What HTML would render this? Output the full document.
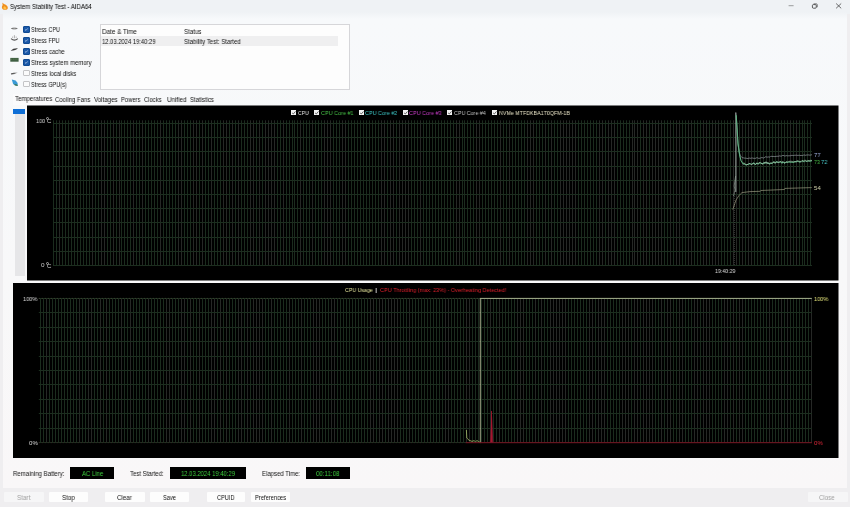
<!DOCTYPE html>
<html><head><meta charset="utf-8">
<style>
html,body{margin:0;padding:0;}
body{width:850px;height:507px;overflow:hidden;position:relative;background:#efeef0;font-family:"Liberation Sans",sans-serif;color:#1b1b1b;}
.a{position:absolute;white-space:nowrap;line-height:1;transform-origin:0 0;will-change:transform;}
.t{font-size:6.5px;letter-spacing:-0.2px;}
#title{position:absolute;left:0;top:0;width:850px;height:14px;background:#eff2f5;}
#panel{position:absolute;left:3px;top:12px;width:844px;height:475.5px;background:linear-gradient(#eff2f5,#f7f9fb 7px,#f8f8f9 55%,#f9f7f8);}
.cb{position:absolute;width:4.4px;height:4.4px;border-radius:1px;background:#1a58a8;border:0.5px solid #0f4a92;}
.cb svg{position:absolute;left:0;top:0;}
.ucb{position:absolute;width:4.4px;height:4.4px;border-radius:1px;background:#fbfbfb;border:0.55px solid #c4c4c6;}
.btn{position:absolute;height:10px;background:#fdfdfd;border-radius:1px;}
.blk{position:absolute;background:#000;color:#3fd23f;font-size:6.5px;letter-spacing:-0.2px;text-align:center;}
</style></head><body>
<div id="title"></div>
<div id="panel"></div>
<!-- title -->
<svg class="a" style="left:0;top:0" width="10" height="12"><path d="M2.2 2.4C3.2 3.6 4.2 3.8 5.3 4.6C6.8 5.6 8 6.6 7.8 8.2C7.6 9.4 6.2 9.9 4.8 9.8C3.2 9.7 2 8.8 1.9 7.4C1.8 6.4 2.5 5.8 2.6 4.8C2.7 4 2.4 3.2 2.2 2.4Z" fill="#f0901e"/><path d="M4.2 6.2C5.4 6.8 6.4 7.4 6.3 8.4C6.2 9.1 5.4 9.4 4.7 9.3C3.8 9.2 3.3 8.6 3.4 7.8C3.5 7.2 4 6.9 4.2 6.2Z" fill="#ffc24a"/></svg>
<svg class="a" style="left:780px;top:0" width="70" height="14">
<path d="M8.6 5.7H13.6" stroke="#555" stroke-width="0.55"/>
<rect x="32.4" y="4.6" width="3.9" height="3.6" rx="1" fill="none" stroke="#333" stroke-width="0.8"/>
<path d="M33.6 3.8H36.2Q37.3 3.8 37.3 4.9V7.2" fill="none" stroke="#333" stroke-width="0.6"/>
<path d="M56.1 3.5L61.2 8.3M61.2 3.5L56.1 8.3" stroke="#333" stroke-width="0.7"/>
</svg>
<!-- checkboxes -->
<div class="cb" style="left:23.3px;top:26.15px"><svg width="5" height="5" viewBox="0 0 5 5" style="position:absolute;left:0;top:0"><path d="M1.0 2.5L2.0 3.4L3.7 1.4" stroke="#dce8f8" stroke-width="0.6" fill="none"/></svg></div>
<div class="cb" style="left:23.3px;top:37.25px"><svg width="5" height="5" viewBox="0 0 5 5" style="position:absolute;left:0;top:0"><path d="M1.0 2.5L2.0 3.4L3.7 1.4" stroke="#dce8f8" stroke-width="0.6" fill="none"/></svg></div>
<div class="cb" style="left:23.3px;top:48.35px"><svg width="5" height="5" viewBox="0 0 5 5" style="position:absolute;left:0;top:0"><path d="M1.0 2.5L2.0 3.4L3.7 1.4" stroke="#dce8f8" stroke-width="0.6" fill="none"/></svg></div>
<div class="cb" style="left:23.3px;top:59.30px"><svg width="5" height="5" viewBox="0 0 5 5" style="position:absolute;left:0;top:0"><path d="M1.0 2.5L2.0 3.4L3.7 1.4" stroke="#dce8f8" stroke-width="0.6" fill="none"/></svg></div>
<div class="ucb" style="left:23.3px;top:69.60px"></div>
<div class="ucb" style="left:23.3px;top:80.70px"></div>
<svg class="a" style="left:0;top:0" width="22" height="90"><defs><linearGradient id="dk" x1="0" x2="1"><stop offset="0" stop-color="#2e2e2e"/><stop offset="0.55" stop-color="#777"/><stop offset="1" stop-color="#d0d0d0"/></linearGradient><linearGradient id="cpu" x1="0" x2="1"><stop offset="0" stop-color="#555"/><stop offset="0.5" stop-color="#9a9a9a"/><stop offset="1" stop-color="#555"/></linearGradient></defs><path d="M10.8 28.5Q14.3 26.6 17.9 28.5Q14.3 30.3 10.8 28.5Z" fill="url(#cpu)"/><path d="M11 38.6Q14.4 41.6 17.8 38.6" stroke="#555" stroke-width="1.1" fill="none"/><path d="M14.4 35.2V38.2M12.6 36.6V37.8M16.2 36.6V37.8" stroke="#999" stroke-width="0.8"/><path d="M10.9 50.5Q13 48 17.9 48.2Q16 50.2 10.9 50.8Z" fill="#3c3c3c"/><rect x="10.3" y="57.9" width="8.3" height="3.8" fill="#3f5f42"/><path d="M11 59.2H18" stroke="#6d8a60" stroke-width="0.7" stroke-dasharray="1 0.8"/><path d="M10.9 73.4Q14 72.4 18 72.6Q15 74.6 11.2 74.6Z" fill="url(#dk)"/><path d="M11.8 79.6L15.6 80.4L17.6 83L17.6 85.6L13.2 84.2Z" fill="#3a9ad6"/><path d="M14.2 84L17.6 84.8L17.8 85.9L14.8 85.4Z" fill="#2b6a48"/></svg>
<div class="a" style="left:100px;top:24px;width:250px;height:66px;background:#fdfdfd;border:1px solid #d6d6d9;box-sizing:border-box"></div>
<div class="a" style="left:101px;top:36.1px;width:237px;height:9.7px;background:#efeff0"></div>
<div class="a" style="left:13px;top:94px;width:40px;height:11px;background:#fbfbfc"></div>
<div class="a" style="left:15px;top:114px;width:10px;height:162.4px;background:#e6e6e8"></div>
<div class="a" style="left:13px;top:108.8px;width:12px;height:5.4px;background:#0f6fd6"></div>
<div class="blk" style="left:70.2px;top:466.5px;width:43.8px;height:12.9px;"></div>
<div class="blk" style="left:169.6px;top:466.5px;width:76.4px;height:12.9px;"></div>
<div class="blk" style="left:306px;top:466.5px;width:43.7px;height:12.9px;"></div>
<div class="btn" style="left:3.9px;top:492px;width:39.8px;background:#f6f6f7;"></div>
<div class="btn" style="left:48.5px;top:492px;width:39.3px;"></div>
<div class="btn" style="left:105.3px;top:492px;width:39.7px;"></div>
<div class="btn" style="left:149.6px;top:492px;width:39.2px;"></div>
<div class="btn" style="left:206.7px;top:492px;width:38.8px;"></div>
<div class="btn" style="left:250.7px;top:492px;width:39.4px;"></div>
<div class="btn" style="left:808px;top:492px;width:39.6px;background:#f6f6f7;"></div>
<svg class="a" style="left:0;top:0" width="850" height="507">
<rect x="27" y="105.5" width="811.5" height="175" fill="#000"/>
<path d="M53.50 120.3V265.5M56.50 120.3V265.5M62.50 120.3V265.5M65.50 120.3V265.5M68.50 120.3V265.5M71.50 120.3V265.5M74.50 120.3V265.5M77.50 120.3V265.5M80.50 120.3V265.5M83.50 120.3V265.5M86.50 120.3V265.5M89.50 120.3V265.5M95.50 120.3V265.5M98.50 120.3V265.5M107.50 120.3V265.5M110.50 120.3V265.5M116.50 120.3V265.5M121.50 120.3V265.5M124.50 120.3V265.5M127.50 120.3V265.5M130.50 120.3V265.5M136.50 120.3V265.5M139.50 120.3V265.5M145.50 120.3V265.5M148.50 120.3V265.5M151.50 120.3V265.5M154.50 120.3V265.5M157.50 120.3V265.5M163.50 120.3V265.5M166.50 120.3V265.5M169.50 120.3V265.5M172.50 120.3V265.5M175.50 120.3V265.5M184.50 120.3V265.5M187.50 120.3V265.5M190.50 120.3V265.5M199.50 120.3V265.5M205.50 120.3V265.5M208.50 120.3V265.5M214.50 120.3V265.5M217.50 120.3V265.5M220.50 120.3V265.5M229.50 120.3V265.5M235.50 120.3V265.5M241.50 120.3V265.5M244.50 120.3V265.5M247.50 120.3V265.5M256.50 120.3V265.5M262.50 120.3V265.5M277.50 120.3V265.5M280.50 120.3V265.5M286.50 120.3V265.5M289.50 120.3V265.5M292.50 120.3V265.5M294.50 120.3V265.5M297.50 120.3V265.5M303.50 120.3V265.5M306.50 120.3V265.5M309.50 120.3V265.5M315.50 120.3V265.5M318.50 120.3V265.5M321.50 120.3V265.5M333.50 120.3V265.5M336.50 120.3V265.5M339.50 120.3V265.5M348.50 120.3V265.5M351.50 120.3V265.5M354.50 120.3V265.5M357.50 120.3V265.5M360.50 120.3V265.5M363.50 120.3V265.5M366.50 120.3V265.5M369.50 120.3V265.5M372.50 120.3V265.5M375.50 120.3V265.5M378.50 120.3V265.5M387.50 120.3V265.5M396.50 120.3V265.5M411.50 120.3V265.5M414.50 120.3V265.5M417.50 120.3V265.5M423.50 120.3V265.5M426.50 120.3V265.5M429.50 120.3V265.5M432.50 120.3V265.5M435.50 120.3V265.5M438.50 120.3V265.5M441.50 120.3V265.5M444.50 120.3V265.5M447.50 120.3V265.5M450.50 120.3V265.5M453.50 120.3V265.5M462.50 120.3V265.5M464.50 120.3V265.5M467.50 120.3V265.5M470.50 120.3V265.5M473.50 120.3V265.5M482.50 120.3V265.5M485.50 120.3V265.5M488.50 120.3V265.5M491.50 120.3V265.5M494.50 120.3V265.5M497.50 120.3V265.5M503.50 120.3V265.5M506.50 120.3V265.5M512.50 120.3V265.5M515.50 120.3V265.5M518.50 120.3V265.5M521.50 120.3V265.5M524.50 120.3V265.5M536.50 120.3V265.5M539.50 120.3V265.5M542.50 120.3V265.5M548.50 120.3V265.5M554.50 120.3V265.5M557.50 120.3V265.5M578.50 120.3V265.5M581.50 120.3V265.5M584.50 120.3V265.5M587.50 120.3V265.5M590.50 120.3V265.5M593.50 120.3V265.5M596.50 120.3V265.5M605.50 120.3V265.5M617.50 120.3V265.5M620.50 120.3V265.5M623.50 120.3V265.5M626.50 120.3V265.5M629.50 120.3V265.5M640.50 120.3V265.5M649.50 120.3V265.5M664.50 120.3V265.5M667.50 120.3V265.5M673.50 120.3V265.5M682.50 120.3V265.5M685.50 120.3V265.5M694.50 120.3V265.5M697.50 120.3V265.5M700.50 120.3V265.5M709.50 120.3V265.5M721.50 120.3V265.5M724.50 120.3V265.5M727.50 120.3V265.5M730.50 120.3V265.5M739.50 120.3V265.5M745.50 120.3V265.5M754.50 120.3V265.5M757.50 120.3V265.5M760.50 120.3V265.5M763.50 120.3V265.5M766.50 120.3V265.5M769.50 120.3V265.5M772.50 120.3V265.5M775.50 120.3V265.5M781.50 120.3V265.5M784.50 120.3V265.5M787.50 120.3V265.5M793.50 120.3V265.5M799.50 120.3V265.5M802.50 120.3V265.5M804.50 120.3V265.5M807.50 120.3V265.5M810.50 120.3V265.5" stroke="rgb(27,44,30)" stroke-width="1.0" fill="none"/><path d="M59.50 120.3V265.5M92.50 120.3V265.5M101.50 120.3V265.5M104.50 120.3V265.5M113.50 120.3V265.5M119.50 120.3V265.5M133.50 120.3V265.5M142.50 120.3V265.5M160.50 120.3V265.5M178.50 120.3V265.5M181.50 120.3V265.5M193.50 120.3V265.5M196.50 120.3V265.5M202.50 120.3V265.5M211.50 120.3V265.5M223.50 120.3V265.5M226.50 120.3V265.5M232.50 120.3V265.5M238.50 120.3V265.5M250.50 120.3V265.5M253.50 120.3V265.5M259.50 120.3V265.5M265.50 120.3V265.5M268.50 120.3V265.5M271.50 120.3V265.5M274.50 120.3V265.5M283.50 120.3V265.5M300.50 120.3V265.5M312.50 120.3V265.5M324.50 120.3V265.5M327.50 120.3V265.5M330.50 120.3V265.5M342.50 120.3V265.5M345.50 120.3V265.5M381.50 120.3V265.5M384.50 120.3V265.5M390.50 120.3V265.5M393.50 120.3V265.5M399.50 120.3V265.5M402.50 120.3V265.5M405.50 120.3V265.5M408.50 120.3V265.5M420.50 120.3V265.5M456.50 120.3V265.5M459.50 120.3V265.5M476.50 120.3V265.5M479.50 120.3V265.5M500.50 120.3V265.5M509.50 120.3V265.5M527.50 120.3V265.5M530.50 120.3V265.5M533.50 120.3V265.5M545.50 120.3V265.5M551.50 120.3V265.5M560.50 120.3V265.5M563.50 120.3V265.5M566.50 120.3V265.5M569.50 120.3V265.5M572.50 120.3V265.5M575.50 120.3V265.5M599.50 120.3V265.5M602.50 120.3V265.5M608.50 120.3V265.5M611.50 120.3V265.5M614.50 120.3V265.5M632.50 120.3V265.5M634.50 120.3V265.5M637.50 120.3V265.5M643.50 120.3V265.5M646.50 120.3V265.5M652.50 120.3V265.5M655.50 120.3V265.5M658.50 120.3V265.5M661.50 120.3V265.5M670.50 120.3V265.5M676.50 120.3V265.5M679.50 120.3V265.5M688.50 120.3V265.5M691.50 120.3V265.5M703.50 120.3V265.5M706.50 120.3V265.5M712.50 120.3V265.5M715.50 120.3V265.5M718.50 120.3V265.5M733.50 120.3V265.5M736.50 120.3V265.5M742.50 120.3V265.5M748.50 120.3V265.5M751.50 120.3V265.5M778.50 120.3V265.5M790.50 120.3V265.5M796.50 120.3V265.5" stroke="rgb(38,40,38)" stroke-width="1.0" fill="none"/>
<path d="M53 123.50H812M53 137.50H812M53 151.50H812M53 166.50H812M53 180.50H812M53 194.50H812M53 208.50H812M53 222.50H812M53 237.50H812M53 251.50H812M53 265.50H812" stroke="rgb(28,46,31)" stroke-width="1.0" fill="none"/>
<path d="M735.8 112.3V192" stroke="#b8c4bc" stroke-width="0.8" fill="none"/>
<path d="M735.6 176L734.2 186L735 190L733.6 196" stroke="#9aa69e" stroke-width="0.7" fill="none"/>
<path d="M734.3 192V265" stroke="#4a4a4a" stroke-width="0.8" stroke-dasharray="1 1" fill="none"/>
<polyline points="735.80,113.00 736.60,121.00 737.20,133.00 738.00,144.00 739.00,151.50 740.50,155.80 742.00,157.60 745.00,158.20 746.00,158.10 747.00,158.50 748.00,158.50 749.00,158.10 750.00,158.10 751.00,158.50 752.00,157.60 753.00,158.50 754.00,158.10 755.00,158.50 756.00,158.10 757.00,157.60 758.00,158.10 759.00,158.50 760.00,158.10 761.00,157.97 762.00,157.33 763.00,158.10 764.00,157.97 765.00,156.93 766.00,156.80 767.00,157.17 768.00,157.03 769.00,156.90 770.00,157.17 771.00,156.13 772.00,156.50 773.00,156.46 774.00,156.41 775.00,156.77 776.00,156.33 777.00,156.29 778.00,156.25 779.00,156.20 780.00,155.66 781.00,156.52 782.00,155.57 783.00,155.53 784.00,155.49 785.00,156.35 786.00,155.41 787.00,155.86 788.00,155.82 789.00,155.78 790.00,155.74 791.00,155.69 792.00,155.15 793.00,155.61 794.00,155.56 795.00,155.02 796.00,155.48 797.00,154.94 798.00,155.80 799.00,154.85 800.00,155.71 801.00,155.27 802.00,155.62 803.00,155.58 804.00,154.64 805.00,155.50 806.00,155.06 807.00,155.01 808.00,154.97 809.00,154.93 810.00,155.28 811.00,154.84 812.00,154.80" fill="none" stroke="#8e9499" stroke-width="0.7" stroke-linejoin="round"/>
<polyline points="736.20,115.00 737.00,127.00 738.00,144.00 739.50,155.00 741.00,160.50 743.00,163.50 745.00,164.30 746.00,164.99 747.00,164.83 748.00,164.18 749.00,164.39 750.00,163.43 751.00,164.50 752.00,163.99 753.00,163.42 754.00,162.97 755.00,164.34 756.00,164.54 757.00,162.87 758.00,164.10 759.00,163.35 760.00,162.83 761.00,163.04 762.00,163.85 763.00,163.98 764.00,162.44 765.00,163.42 766.00,162.35 767.00,163.51 768.00,162.76 769.00,163.70 770.00,163.83 771.00,162.93 772.00,163.77 773.00,162.48 774.00,162.01 775.00,162.90 776.00,161.83 777.00,162.08 778.00,162.41 779.00,162.72 780.00,161.86 781.00,161.60 782.00,163.04 783.00,161.99 784.00,163.10 785.00,162.94 786.00,161.96 787.00,162.06 788.00,162.12 789.00,162.29 790.00,162.16 791.00,162.04 792.00,162.10 793.00,162.63 794.00,161.80 795.00,161.61 796.00,162.08 797.00,161.17 798.00,161.23 799.00,162.40 800.00,161.53 801.00,161.53 802.00,160.51 803.00,161.19 804.00,161.44 805.00,160.38 806.00,161.40 807.00,161.38 808.00,160.31 809.00,161.28 810.00,160.94 811.00,161.27 812.00,160.63" fill="none" stroke="#2f8f50" stroke-width="1.0" stroke-linejoin="round"/>
<polyline points="736.20,115.33 737.00,127.38 738.00,143.24 739.50,154.30 741.00,160.78 743.00,164.24 745.00,163.90 746.00,164.92 747.00,164.98 748.00,163.89 749.00,164.17 750.00,163.13 751.00,164.29 752.00,164.14 753.00,163.10 754.00,162.77 755.00,164.78 756.00,163.78 757.00,162.98 758.00,164.48 759.00,163.05 760.00,162.39 761.00,163.53 762.00,163.43 763.00,163.48 764.00,162.34 765.00,163.74 766.00,161.71 767.00,163.22 768.00,162.50 769.00,164.24 770.00,163.74 771.00,163.50 772.00,163.24 773.00,162.22 774.00,162.25 775.00,163.52 776.00,161.75 777.00,161.64 778.00,161.80 779.00,162.77 780.00,161.36 781.00,162.09 782.00,163.58 783.00,161.49 784.00,162.75 785.00,163.44 786.00,162.19 787.00,162.55 788.00,161.87 789.00,161.70 790.00,161.82 791.00,162.51 792.00,161.74 793.00,162.38 794.00,161.67 795.00,161.49 796.00,161.94 797.00,161.84 798.00,160.68 799.00,161.61 800.00,162.24 801.00,162.14 802.00,161.29 803.00,161.09 804.00,162.16 805.00,161.06 806.00,160.96 807.00,161.78 808.00,160.84 809.00,161.54 810.00,160.97 811.00,160.93 812.00,160.38" fill="none" stroke="#9ad8bc" stroke-width="0.5" stroke-linejoin="round"/>
<polyline points="743.00,162.86 745.00,163.41 746.00,164.93 747.00,164.29 748.00,164.47 749.00,163.46 750.00,163.88 751.00,164.61 752.00,164.47 753.00,163.85 754.00,163.41 755.00,164.27 756.00,163.56 757.00,163.06 758.00,163.38 759.00,162.83 760.00,162.89 761.00,162.88 762.00,163.51 763.00,164.49 764.00,162.42 765.00,162.97 766.00,161.75 767.00,163.89 768.00,162.53 769.00,163.96 770.00,163.40 771.00,162.24 772.00,163.62 773.00,162.79 774.00,161.28 775.00,163.17 776.00,162.30 777.00,162.37 778.00,162.73 779.00,161.74 780.00,161.86 781.00,161.98 782.00,162.12 783.00,161.43 784.00,162.53 785.00,162.79 786.00,161.64 787.00,161.82 788.00,162.36 789.00,161.29 790.00,161.24 791.00,161.24 792.00,161.30 793.00,161.74 794.00,162.36 795.00,161.98 796.00,161.22 797.00,160.97 798.00,160.74 799.00,161.90 800.00,161.09 801.00,161.56 802.00,160.45 803.00,160.77 804.00,160.74 805.00,159.91 806.00,160.60 807.00,161.27 808.00,160.45 809.00,160.89 810.00,160.07 811.00,160.56 812.00,160.23" fill="none" stroke="#b9c9bd" stroke-width="0.45" stroke-linejoin="round"/>
<polyline points="732.80,209.60 734.00,206.00 735.00,203.00 736.00,200.00 737.00,198.50 738.00,197.00 739.00,195.50 740.60,193.80 742.00,192.60 750.00,191.60 760.30,191.30 760.80,190.50 784.40,189.50 784.90,188.40 811.80,187.60" fill="none" stroke="#9a9a80" stroke-width="0.7" stroke-linejoin="round"/>
<rect x="13" y="283" width="825.5" height="175" fill="#000"/>
<path d="M40.50 298.4V442.7M43.50 298.4V442.7M49.50 298.4V442.7M52.50 298.4V442.7M55.50 298.4V442.7M58.50 298.4V442.7M61.50 298.4V442.7M64.50 298.4V442.7M67.50 298.4V442.7M70.50 298.4V442.7M73.50 298.4V442.7M76.50 298.4V442.7M82.50 298.4V442.7M85.50 298.4V442.7M94.50 298.4V442.7M97.50 298.4V442.7M103.50 298.4V442.7M109.50 298.4V442.7M112.50 298.4V442.7M115.50 298.4V442.7M118.50 298.4V442.7M124.50 298.4V442.7M127.50 298.4V442.7M133.50 298.4V442.7M136.50 298.4V442.7M139.50 298.4V442.7M142.50 298.4V442.7M145.50 298.4V442.7M151.50 298.4V442.7M154.50 298.4V442.7M157.50 298.4V442.7M160.50 298.4V442.7M163.50 298.4V442.7M172.50 298.4V442.7M175.50 298.4V442.7M178.50 298.4V442.7M187.50 298.4V442.7M193.50 298.4V442.7M196.50 298.4V442.7M202.50 298.4V442.7M205.50 298.4V442.7M208.50 298.4V442.7M217.50 298.4V442.7M223.50 298.4V442.7M229.50 298.4V442.7M232.50 298.4V442.7M235.50 298.4V442.7M244.50 298.4V442.7M250.50 298.4V442.7M265.50 298.4V442.7M268.50 298.4V442.7M274.50 298.4V442.7M277.50 298.4V442.7M280.50 298.4V442.7M283.50 298.4V442.7M286.50 298.4V442.7M292.50 298.4V442.7M295.50 298.4V442.7M298.50 298.4V442.7M304.50 298.4V442.7M307.50 298.4V442.7M310.50 298.4V442.7M322.50 298.4V442.7M325.50 298.4V442.7M328.50 298.4V442.7M337.50 298.4V442.7M340.50 298.4V442.7M343.50 298.4V442.7M346.50 298.4V442.7M349.50 298.4V442.7M352.50 298.4V442.7M355.50 298.4V442.7M358.50 298.4V442.7M361.50 298.4V442.7M364.50 298.4V442.7M367.50 298.4V442.7M376.50 298.4V442.7M385.50 298.4V442.7M400.50 298.4V442.7M403.50 298.4V442.7M406.50 298.4V442.7M412.50 298.4V442.7M415.50 298.4V442.7M418.50 298.4V442.7M421.50 298.4V442.7M424.50 298.4V442.7M427.50 298.4V442.7M430.50 298.4V442.7M433.50 298.4V442.7M436.50 298.4V442.7M439.50 298.4V442.7M442.50 298.4V442.7M451.50 298.4V442.7M454.50 298.4V442.7M457.50 298.4V442.7M460.50 298.4V442.7M463.50 298.4V442.7M472.50 298.4V442.7M475.50 298.4V442.7M478.50 298.4V442.7M481.50 298.4V442.7M484.50 298.4V442.7M487.50 298.4V442.7M493.50 298.4V442.7M496.50 298.4V442.7M502.50 298.4V442.7M505.50 298.4V442.7M508.50 298.4V442.7M511.50 298.4V442.7M514.50 298.4V442.7M526.50 298.4V442.7M529.50 298.4V442.7M532.50 298.4V442.7M538.50 298.4V442.7M544.50 298.4V442.7M547.50 298.4V442.7M568.50 298.4V442.7M571.50 298.4V442.7M574.50 298.4V442.7M577.50 298.4V442.7M580.50 298.4V442.7M583.50 298.4V442.7M586.50 298.4V442.7M595.50 298.4V442.7M607.50 298.4V442.7M610.50 298.4V442.7M613.50 298.4V442.7M616.50 298.4V442.7M619.50 298.4V442.7M631.50 298.4V442.7M640.50 298.4V442.7M655.50 298.4V442.7M658.50 298.4V442.7M664.50 298.4V442.7M673.50 298.4V442.7M676.50 298.4V442.7M685.50 298.4V442.7M688.50 298.4V442.7M691.50 298.4V442.7M700.50 298.4V442.7M712.50 298.4V442.7M715.50 298.4V442.7M718.50 298.4V442.7M721.50 298.4V442.7M730.50 298.4V442.7M736.50 298.4V442.7M745.50 298.4V442.7M748.50 298.4V442.7M751.50 298.4V442.7M754.50 298.4V442.7M757.50 298.4V442.7M760.50 298.4V442.7M763.50 298.4V442.7M766.50 298.4V442.7M772.50 298.4V442.7M775.50 298.4V442.7M778.50 298.4V442.7M784.50 298.4V442.7M790.50 298.4V442.7M793.50 298.4V442.7M796.50 298.4V442.7M799.50 298.4V442.7M802.50 298.4V442.7M805.50 298.4V442.7M808.50 298.4V442.7" stroke="rgb(27,44,30)" stroke-width="1.0" fill="none"/><path d="M46.50 298.4V442.7M79.50 298.4V442.7M88.50 298.4V442.7M91.50 298.4V442.7M100.50 298.4V442.7M106.50 298.4V442.7M121.50 298.4V442.7M130.50 298.4V442.7M148.50 298.4V442.7M166.50 298.4V442.7M169.50 298.4V442.7M181.50 298.4V442.7M184.50 298.4V442.7M190.50 298.4V442.7M199.50 298.4V442.7M211.50 298.4V442.7M214.50 298.4V442.7M220.50 298.4V442.7M226.50 298.4V442.7M238.50 298.4V442.7M241.50 298.4V442.7M247.50 298.4V442.7M253.50 298.4V442.7M256.50 298.4V442.7M259.50 298.4V442.7M262.50 298.4V442.7M271.50 298.4V442.7M289.50 298.4V442.7M301.50 298.4V442.7M313.50 298.4V442.7M316.50 298.4V442.7M319.50 298.4V442.7M331.50 298.4V442.7M334.50 298.4V442.7M370.50 298.4V442.7M373.50 298.4V442.7M379.50 298.4V442.7M382.50 298.4V442.7M388.50 298.4V442.7M391.50 298.4V442.7M394.50 298.4V442.7M397.50 298.4V442.7M409.50 298.4V442.7M445.50 298.4V442.7M448.50 298.4V442.7M466.50 298.4V442.7M469.50 298.4V442.7M490.50 298.4V442.7M499.50 298.4V442.7M517.50 298.4V442.7M520.50 298.4V442.7M523.50 298.4V442.7M535.50 298.4V442.7M541.50 298.4V442.7M550.50 298.4V442.7M553.50 298.4V442.7M556.50 298.4V442.7M559.50 298.4V442.7M562.50 298.4V442.7M565.50 298.4V442.7M589.50 298.4V442.7M592.50 298.4V442.7M598.50 298.4V442.7M601.50 298.4V442.7M604.50 298.4V442.7M622.50 298.4V442.7M625.50 298.4V442.7M628.50 298.4V442.7M634.50 298.4V442.7M637.50 298.4V442.7M643.50 298.4V442.7M646.50 298.4V442.7M649.50 298.4V442.7M652.50 298.4V442.7M661.50 298.4V442.7M667.50 298.4V442.7M670.50 298.4V442.7M679.50 298.4V442.7M682.50 298.4V442.7M694.50 298.4V442.7M697.50 298.4V442.7M703.50 298.4V442.7M706.50 298.4V442.7M709.50 298.4V442.7M724.50 298.4V442.7M727.50 298.4V442.7M733.50 298.4V442.7M739.50 298.4V442.7M742.50 298.4V442.7M769.50 298.4V442.7M781.50 298.4V442.7M787.50 298.4V442.7M811.50 298.4V442.7" stroke="rgb(38,40,38)" stroke-width="1.0" fill="none"/>
<path d="M38.8 298.50H812M38.8 312.50H812M38.8 327.50H812M38.8 341.50H812M38.8 356.50H812M38.8 370.50H812M38.8 384.50H812M38.8 399.50H812M38.8 413.50H812M38.8 428.50H812M38.8 442.50H812" stroke="rgb(28,46,31)" stroke-width="1.0" fill="none"/>
<path d="M38.8 298.4H481" stroke="#4b4b3a" stroke-width="0.8" stroke-dasharray="1 2" fill="none"/>
<path d="M38.8 442.7H466" stroke="#3b2323" stroke-width="0.8" stroke-dasharray="1 2" fill="none"/>
<path d="M480.3 442.7V298.4H811.8" stroke="#c8d0a8" stroke-width="0.8" fill="none"/>
<path d="M466.4 430L466.8 438L469 440.2L472 441.4L474 440.6L475.5 441.8L477 440.5L478.5 441.6L480.3 442.6" stroke="#a6bf6c" stroke-width="0.8" fill="none"/>
<path d="M466 442.7H812" stroke="#781222" stroke-width="1" fill="none"/>
<path d="M489.8 443L491.3 418L491.6 410L492.2 418L493.3 443Z" fill="#7a1428"/>
<path d="M491.5 411V442" stroke="#b01830" stroke-width="0.8"/>
</svg>
<div class="a" style="left:290.7px;top:109.5px;width:5.4px;height:5.4px;background:#f2f2f2;"><svg width="6" height="6" style="position:absolute;left:0;top:0"><path d="M1.1 2.9L2.3 4.0L4.5 1.4" stroke="#444" stroke-width="0.8" fill="none"/></svg></div>
<div class="a" style="left:314.4px;top:109.5px;width:5.4px;height:5.4px;background:#f2f2f2;"><svg width="6" height="6" style="position:absolute;left:0;top:0"><path d="M1.1 2.9L2.3 4.0L4.5 1.4" stroke="#444" stroke-width="0.8" fill="none"/></svg></div>
<div class="a" style="left:358.9px;top:109.5px;width:5.4px;height:5.4px;background:#f2f2f2;"><svg width="6" height="6" style="position:absolute;left:0;top:0"><path d="M1.1 2.9L2.3 4.0L4.5 1.4" stroke="#444" stroke-width="0.8" fill="none"/></svg></div>
<div class="a" style="left:402.5px;top:109.5px;width:5.4px;height:5.4px;background:#f2f2f2;"><svg width="6" height="6" style="position:absolute;left:0;top:0"><path d="M1.1 2.9L2.3 4.0L4.5 1.4" stroke="#444" stroke-width="0.8" fill="none"/></svg></div>
<div class="a" style="left:447px;top:109.5px;width:5.4px;height:5.4px;background:#f2f2f2;"><svg width="6" height="6" style="position:absolute;left:0;top:0"><path d="M1.1 2.9L2.3 4.0L4.5 1.4" stroke="#444" stroke-width="0.8" fill="none"/></svg></div>
<div class="a" style="left:492.1px;top:109.5px;width:5.4px;height:5.4px;background:#f2f2f2;"><svg width="6" height="6" style="position:absolute;left:0;top:0"><path d="M1.1 2.9L2.3 4.0L4.5 1.4" stroke="#444" stroke-width="0.8" fill="none"/></svg></div><div class="a" style="left:10.00px;top:3.56px;font-size:6.9px;color:#000000;font-weight:normal;transform:scaleX(0.879);">System Stability Test - AIDA64</div>
<div class="a" style="left:30.72px;top:26.66px;font-size:6.9px;color:#111111;font-weight:normal;transform:scaleX(0.807);">Stress CPU</div>
<div class="a" style="left:30.72px;top:38.06px;font-size:6.9px;color:#111111;font-weight:normal;transform:scaleX(0.808);">Stress FPU</div>
<div class="a" style="left:30.71px;top:49.06px;font-size:6.9px;color:#111111;font-weight:normal;transform:scaleX(0.841);">Stress cache</div>
<div class="a" style="left:30.70px;top:60.06px;font-size:6.9px;color:#111111;font-weight:normal;transform:scaleX(0.865);">Stress system memory</div>
<div class="a" style="left:30.71px;top:70.96px;font-size:6.9px;color:#111111;font-weight:normal;transform:scaleX(0.851);">Stress local disks</div>
<div class="a" style="left:30.72px;top:81.96px;font-size:6.9px;color:#111111;font-weight:normal;transform:scaleX(0.803);">Stress GPU(s)</div>
<div class="a" style="left:102.28px;top:28.56px;font-size:6.9px;color:#111111;font-weight:normal;transform:scaleX(0.921);">Date &amp; Time</div>
<div class="a" style="left:183.59px;top:28.56px;font-size:6.9px;color:#111111;font-weight:normal;transform:scaleX(0.897);">Status</div>
<div class="a" style="left:102.31px;top:39.06px;font-size:6.9px;color:#111111;font-weight:normal;transform:scaleX(0.846);">12.03.2024 19:40:29</div>
<div class="a" style="left:183.50px;top:39.06px;font-size:6.9px;color:#111111;font-weight:normal;transform:scaleX(0.878);">Stability Test: Started</div>
<div class="a" style="left:14.79px;top:96.06px;font-size:6.9px;color:#111111;font-weight:normal;transform:scaleX(0.886);">Temperatures</div>
<div class="a" style="left:55.40px;top:96.96px;font-size:6.9px;color:#111111;font-weight:normal;transform:scaleX(0.869);">Cooling Fans</div>
<div class="a" style="left:93.69px;top:96.96px;font-size:6.9px;color:#111111;font-weight:normal;transform:scaleX(0.893);">Voltages</div>
<div class="a" style="left:120.71px;top:96.96px;font-size:6.9px;color:#111111;font-weight:normal;transform:scaleX(0.844);">Powers</div>
<div class="a" style="left:143.71px;top:96.96px;font-size:6.9px;color:#111111;font-weight:normal;transform:scaleX(0.851);">Clocks</div>
<div class="a" style="left:166.68px;top:96.96px;font-size:6.9px;color:#111111;font-weight:normal;transform:scaleX(0.915);">Unified</div>
<div class="a" style="left:189.70px;top:96.96px;font-size:6.9px;color:#111111;font-weight:normal;transform:scaleX(0.867);">Statistics</div>
<div class="a" style="left:297.95px;top:110.04px;font-size:6.1px;color:#e4e4e4;font-weight:normal;transform:scaleX(0.832);">CPU</div>
<div class="a" style="left:320.53px;top:110.04px;font-size:6.1px;color:#46c046;font-weight:normal;transform:scaleX(0.898);">CPU Core #1</div>
<div class="a" style="left:365.33px;top:110.04px;font-size:6.1px;color:#3cc4c4;font-weight:normal;transform:scaleX(0.890);">CPU Core #2</div>
<div class="a" style="left:409.03px;top:110.04px;font-size:6.1px;color:#c83cc8;font-weight:normal;transform:scaleX(0.898);">CPU Core #3</div>
<div class="a" style="left:454.23px;top:110.04px;font-size:6.1px;color:#c4c4c4;font-weight:normal;transform:scaleX(0.876);">CPU Core #4</div>
<div class="a" style="left:498.63px;top:110.04px;font-size:6.1px;color:#e4dfc2;font-weight:normal;transform:scaleX(0.873);">NVMe MTFDKBA1T0QFM-1B</div>
<div class="a" style="left:35.53px;top:118.04px;font-size:6.1px;color:#cfcfcf;font-weight:normal;transform:scaleX(0.900);">100</div>
<div class="a" style="left:46.90px;top:118.34px;font-size:6.1px;color:#cfcfcf;font-weight:normal;transform:scaleX(0.976);">C</div>
<div class="a" style="left:40.98px;top:262.44px;font-size:6.1px;color:#cfcfcf;font-weight:normal;transform:scaleX(1.044);">0</div>
<div class="a" style="left:46.90px;top:262.64px;font-size:6.1px;color:#cfcfcf;font-weight:normal;transform:scaleX(0.976);">C</div>
<div class="a" style="left:714.84px;top:268.44px;font-size:6.1px;color:#dcdcdc;font-weight:normal;transform:scaleX(0.861);">19:40:29</div>
<div class="a" style="left:813.71px;top:152.34px;font-size:6.1px;color:#a6b4e4;font-weight:normal;transform:scaleX(0.940);">77</div>
<div class="a" style="left:814.04px;top:158.84px;font-size:6.1px;color:#48c048;font-weight:normal;transform:scaleX(0.859);">73</div>
<div class="a" style="left:821.02px;top:158.84px;font-size:6.1px;color:#4ccccc;font-weight:normal;transform:scaleX(0.924);">72</div>
<div class="a" style="left:813.70px;top:185.24px;font-size:6.1px;color:#d4d4ae;font-weight:normal;transform:scaleX(0.973);">54</div>
<div class="a" style="left:344.94px;top:287.44px;font-size:6.1px;color:#e2e29a;font-weight:normal;transform:scaleX(0.862);">CPU Usage</div>
<div class="a" style="left:374.86px;top:287.44px;font-size:6.1px;color:#f0f0f0;font-weight:normal;transform:scaleX(1.439);">|</div>
<div class="a" style="left:380.22px;top:287.44px;font-size:6.1px;color:#e0202c;font-weight:normal;transform:scaleX(0.908);">CPU Throttling (max: 23%) - Overheating Detected!</div>
<div class="a" style="left:23.02px;top:295.74px;font-size:6.1px;color:#dcdcdc;font-weight:normal;transform:scaleX(0.915);">100%</div>
<div class="a" style="left:28.60px;top:440.34px;font-size:6.1px;color:#dcdcdc;font-weight:normal;transform:scaleX(0.988);">0%</div>
<div class="a" style="left:814.02px;top:295.74px;font-size:6.1px;color:#e2e27a;font-weight:normal;transform:scaleX(0.908);">100%</div>
<div class="a" style="left:813.70px;top:440.24px;font-size:6.1px;color:#e0283a;font-weight:normal;transform:scaleX(0.976);">0%</div>
<div class="a" style="left:12.60px;top:471.06px;font-size:6.9px;color:#111111;font-weight:normal;transform:scaleX(0.879);">Remaining Battery:</div>
<div class="a" style="left:81.70px;top:471.06px;font-size:6.9px;color:#3ed03e;font-weight:normal;transform:scaleX(0.865);">AC Line</div>
<div class="a" style="left:129.90px;top:471.06px;font-size:6.9px;color:#111111;font-weight:normal;transform:scaleX(0.871);">Test Started:</div>
<div class="a" style="left:180.71px;top:471.06px;font-size:6.9px;color:#3ed03e;font-weight:normal;transform:scaleX(0.854);">12.03.2024 19:40:29</div>
<div class="a" style="left:262.10px;top:471.06px;font-size:6.9px;color:#111111;font-weight:normal;transform:scaleX(0.872);">Elapsed Time:</div>
<div class="a" style="left:316.19px;top:471.06px;font-size:6.9px;color:#3ed03e;font-weight:normal;transform:scaleX(0.890);">00:11:08</div>
<div class="a" style="left:17.28px;top:495.06px;font-size:6.9px;color:#a0a0a0;font-weight:normal;transform:scaleX(0.916);">Start</div>
<div class="a" style="left:61.79px;top:495.06px;font-size:6.9px;color:#111111;font-weight:normal;transform:scaleX(0.912);">Stop</div>
<div class="a" style="left:117.49px;top:495.06px;font-size:6.9px;color:#111111;font-weight:normal;transform:scaleX(0.894);">Clear</div>
<div class="a" style="left:162.71px;top:495.06px;font-size:6.9px;color:#111111;font-weight:normal;transform:scaleX(0.832);">Save</div>
<div class="a" style="left:217.22px;top:495.06px;font-size:6.9px;color:#111111;font-weight:normal;transform:scaleX(0.819);">CPUID</div>
<div class="a" style="left:255.21px;top:495.06px;font-size:6.9px;color:#111111;font-weight:normal;transform:scaleX(0.836);">Preferences</div>
<div class="a" style="left:819.29px;top:495.06px;font-size:6.9px;color:#a0a0a0;font-weight:normal;transform:scaleX(0.892);">Close</div>
<div class="a" style="left:45.9px;top:116.9px;width:0.9px;height:0.9px;border:0.5px solid #aaa;border-radius:50%"></div>
<div class="a" style="left:46.1px;top:261.6px;width:0.9px;height:0.9px;border:0.5px solid #aaa;border-radius:50%"></div>
</body></html>
